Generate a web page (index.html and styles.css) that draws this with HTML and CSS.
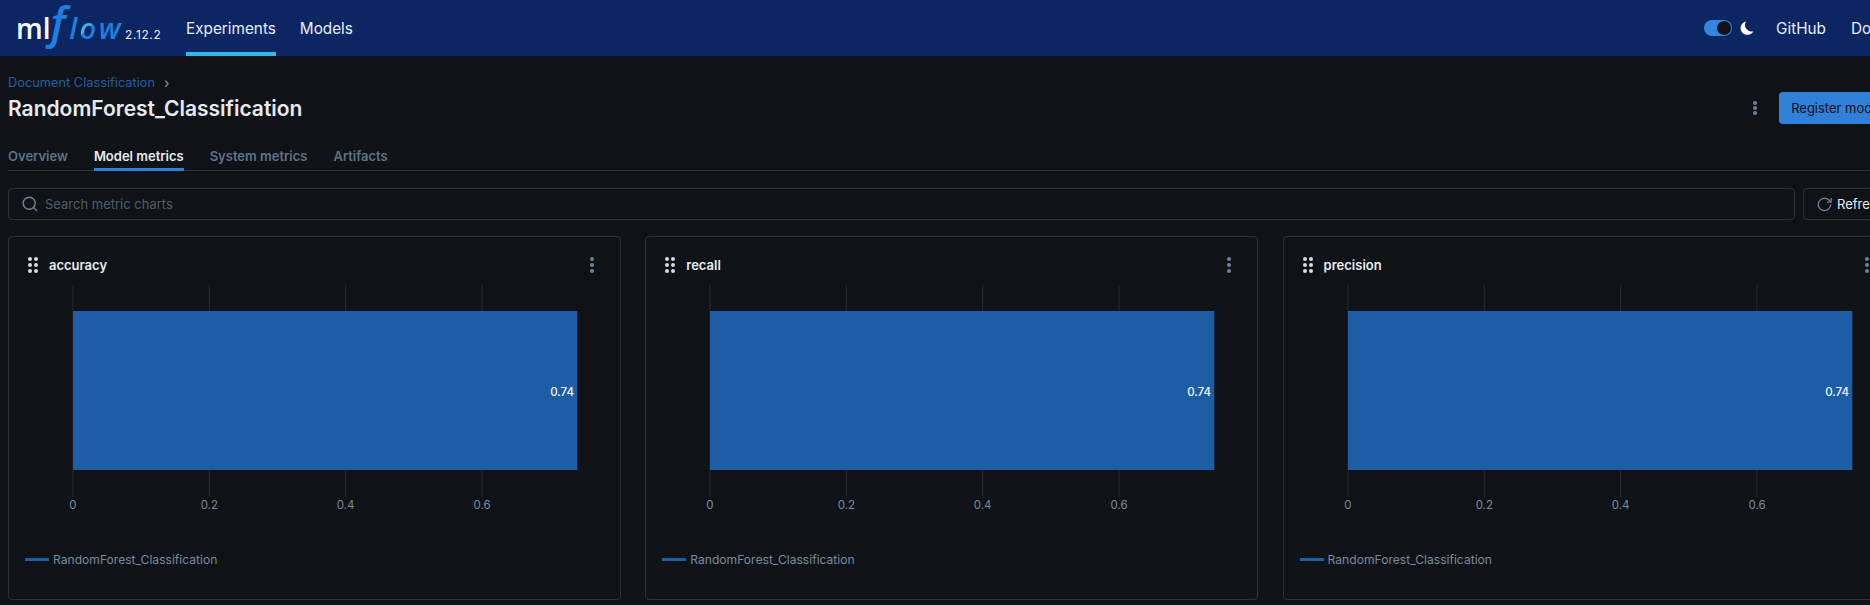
FILE: index.html
```html
<!DOCTYPE html>
<html lang="en">
<head>
    <meta charset="UTF-8">
    <title>RandomForest_Classification - MLflow</title>
    <link rel="stylesheet" href="styles.css">
</head>
<body>
    <header class="topbar">
        <div class="logo">
            <span class="logo-ml">ml</span><span class="logo-flow"><span class="logo-f">f</span>l<span class="logo-o">o</span>w</span>
        </div>
        <span class="version">2.12.2</span>
        <nav class="mainnav">
            <a class="active">Experiments</a>
            <a>Models</a>
        </nav>
        <div class="topright">
            <span class="toggle"><span class="knob"></span></span>
            <svg class="moon" width="14" height="14" viewBox="0 0 14 14"><path d="M6 .4A6.8 6.8 0 1 0 13.4 10.2 6.6 6.6 0 0 1 6 .4Z" fill="#fff"/></svg>
            <a class="link-github">GitHub</a>
            <a class="link-docs">Docs</a>
        </div>
    </header>

    <main class="page">
        <div class="breadcrumb"><a>Document Classification</a><span class="sep">›</span></div>
        <div class="titlerow">
            <h1>RandomForest_Classification</h1>
            <div class="actions">
                <span class="kebab big"><i></i><i></i><i></i></span>
                <button class="primary">Register model</button>
            </div>
        </div>

        <div class="tabs">
            <a>Overview</a>
            <a class="active">Model metrics</a>
            <a>System metrics</a>
            <a>Artifacts</a>
        </div>

        <div class="toolbar">
            <div class="search">
                <svg width="16" height="16" viewBox="0 0 16 16" fill="none" stroke="#6f8195" stroke-width="1.4"><circle cx="7.2" cy="7.2" r="6"/><path d="M11.6 11.6 15 15"/></svg>
                <span>Search metric charts</span>
            </div>
            <button class="refresh">
                <svg width="15" height="15" viewBox="0 0 16 16" fill="none" stroke="#6f8195" stroke-width="1.4"><path d="M14.6 8A6.6 6.6 0 1 1 12.4 3L14.6 5"/><path d="M15 1v4.4h-4.4"/></svg>
                Refresh
            </button>
        </div>

        <div class="cards">
            <section class="card">
                <div class="card-head">
                    <span class="grip"><i></i><i></i><i></i><i></i><i></i><i></i></span>
                    <span class="card-title">accuracy</span>
                    <span class="kebab"><i></i><i></i><i></i></span>
                </div>
                <svg class="chart" width="612" height="232" viewBox="0 0 612 232">
                    <g class="grid"><path d="M64 0V212M200.3 0V212M336.6 0V212M473 0V212"/></g>
                    <rect class="bar" x="64" y="26" width="504.3" height="159"/>
                    <text class="value" x="565" y="111" text-anchor="end">0.74</text>
                    <g class="ticks" text-anchor="middle">
                        <text x="64" y="224">0</text>
                        <text x="200.3" y="224">0.2</text>
                        <text x="336.6" y="224">0.4</text>
                        <text x="473" y="224">0.6</text>
                    </g>
                </svg>
                <div class="legend"><span class="swatch"></span>RandomForest_Classification</div>
            </section>
            <section class="card">
                <div class="card-head">
                    <span class="grip"><i></i><i></i><i></i><i></i><i></i><i></i></span>
                    <span class="card-title">recall</span>
                    <span class="kebab"><i></i><i></i><i></i></span>
                </div>
                <svg class="chart" width="612" height="232" viewBox="0 0 612 232">
                    <g class="grid"><path d="M64 0V212M200.3 0V212M336.6 0V212M473 0V212"/></g>
                    <rect class="bar" x="64" y="26" width="504.3" height="159"/>
                    <text class="value" x="565" y="111" text-anchor="end">0.74</text>
                    <g class="ticks" text-anchor="middle">
                        <text x="64" y="224">0</text>
                        <text x="200.3" y="224">0.2</text>
                        <text x="336.6" y="224">0.4</text>
                        <text x="473" y="224">0.6</text>
                    </g>
                </svg>
                <div class="legend"><span class="swatch"></span>RandomForest_Classification</div>
            </section>
            <section class="card">
                <div class="card-head">
                    <span class="grip"><i></i><i></i><i></i><i></i><i></i><i></i></span>
                    <span class="card-title">precision</span>
                    <span class="kebab"><i></i><i></i><i></i></span>
                </div>
                <svg class="chart" width="612" height="232" viewBox="0 0 612 232">
                    <g class="grid"><path d="M64 0V212M200.3 0V212M336.6 0V212M473 0V212"/></g>
                    <rect class="bar" x="64" y="26" width="504.3" height="159"/>
                    <text class="value" x="565" y="111" text-anchor="end">0.74</text>
                    <g class="ticks" text-anchor="middle">
                        <text x="64" y="224">0</text>
                        <text x="200.3" y="224">0.2</text>
                        <text x="336.6" y="224">0.4</text>
                        <text x="473" y="224">0.6</text>
                    </g>
                </svg>
                <div class="legend"><span class="swatch"></span>RandomForest_Classification</div>
            </section>
        </div>
    </main>
</body>
</html>
```

FILE: styles.css
```css
html, body {
    margin: 0;
    height: 605px;
    overflow: hidden;
    background-color: #0f1317;
}
body {
    width: 1904px;
    font-family: Inter, "Liberation Sans", sans-serif;
    font-size: 13px;
    color: #e6ebf0;
}
button {
    font-family: inherit;
    font-size: 13px;
}

/* top bar */
.topbar {
    height: 56px;
    background-color: #0b2663;
    display: flex;
    align-items: center;
    padding-left: 16px;
    color: #e8eef7;
}
.logo {
    display: flex;
    align-items: baseline;
    width: 109px;
    height: 56px;
    line-height: 50px;
}
.logo-ml {
    font-family: "Open Sans", sans-serif;
    font-size: 28px;
    font-weight: 600;
    color: #fff;
}
.logo-flow {
    font-family: "Open Sans", sans-serif;
    font-size: 29px;
    font-style: italic;
    font-weight: 600;
    letter-spacing: 2.5px;
    color: #1f7fdc;
}
.logo-f {
    font-size: 44px;
    line-height: 1;
    margin-right: 1px;
    font-weight: 600;
}
.logo-o {
    background: linear-gradient(135deg, #35b9e6 50%, #1f7fdc 50%);
    -webkit-background-clip: text;
    background-clip: text;
    color: transparent;
}
.version {
    font-size: 12px;
    letter-spacing: 0.6px;
    margin-top: 12px;
    width: 61px;
}
.mainnav {
    display: flex;
    gap: 24px;
    height: 56px;
}
.mainnav a {
    font-size: 15.3px;
    line-height: 57px;
    box-sizing: border-box;
}
.mainnav a.active {
    border-bottom: 4px solid #33b8e8;
}
.topright {
    margin-left: auto;
    display: flex;
    align-items: center;
    font-size: 15.3px;
    padding-right: 16px;
}
.toggle {
    width: 28px;
    height: 16px;
    background-color: #3584dd;
    border-radius: 8px;
    display: flex;
    align-items: center;
    justify-content: flex-end;
    padding-right: 1px;
    box-sizing: border-box;
}
.knob {
    width: 14px;
    height: 14px;
    border-radius: 50%;
    background-color: #0f1317;
}
.moon {
    margin-left: 8px;
}
.link-github {
    margin-left: 22px;
}
.link-docs {
    margin-left: 25px;
}

/* page */
.page {
    padding: 0 8px;
}
.breadcrumb {
    display: flex;
    align-items: center;
    gap: 9px;
    padding-top: 17px;
    height: 19px;
    line-height: 18px;
    font-size: 12.8px;
    color: #1f5fa6;
}
.breadcrumb .sep {
    color: #8a99a8;
    font-size: 14px;
}
.titlerow {
    display: flex;
    align-items: center;
    justify-content: space-between;
    height: 32px;
}
h1 {
    margin: 0;
    font-size: 21px;
    line-height: 33px;
    font-weight: 600;
    color: #e6ebf0;
}
.actions {
    display: flex;
    align-items: center;
    gap: 22px;
}
.primary {
    background-color: #2f80d9;
    color: #0f1317;
    border: none;
    border-radius: 4px;
    height: 32px;
    padding: 0 13px 0 12px;
}
.kebab {
    display: flex;
    flex-direction: column;
    gap: 2px;
}
.kebab i {
    width: 4px;
    height: 4px;
    border-radius: 50%;
    background-color: #6f8195;
}
.kebab.big {
    gap: 1px;
}

.tabs {
    display: flex;
    gap: 26px;
    margin-top: 18px;
    height: 29px;
    box-sizing: border-box;
    border-bottom: 1px solid #2a333d;
    font-weight: 600;
    color: #5f7186;
}
.tabs a {
    height: 29px;
    box-sizing: border-box;
    line-height: 28px;
}
.tabs a.active {
    color: #e6ebf0;
    border-bottom: 3px solid #2f80d9;
}

.toolbar {
    display: flex;
    gap: 8px;
    margin-top: 17px;
    height: 32px;
}
.search {
    width: 1787px;
    box-sizing: border-box;
    border: 1px solid #2a333d;
    border-radius: 4px;
    display: flex;
    align-items: center;
    gap: 7px;
    padding-left: 13px;
    color: #4f5c68;
}
.refresh {
    flex: 1;
    background: none;
    border: 1px solid #2a333d;
    border-radius: 4px;
    color: #e6ebf0;
    display: flex;
    align-items: center;
    gap: 5px;
    padding-left: 13px;
}

/* chart cards */
.cards {
    display: grid;
    grid-template-columns: repeat(3, 613px);
    gap: 24.3px;
    margin-top: 16px;
}
.card {
    height: 364px;
    box-sizing: border-box;
    border: 1px solid #2a333d;
    border-radius: 4px;
}
.card-head {
    display: flex;
    align-items: center;
    height: 48px;
    box-sizing: border-box;
    padding: 8px 21px 0 19px;
}
.grip {
    display: grid;
    grid-template-columns: 4px 4px;
    gap: 2px;
    column-gap: 2px;
    margin-right: 11px;
}
.grip i {
    width: 4px;
    height: 4px;
    border-radius: 50%;
    background-color: #d5dbe2;
}
.card-title {
    font-weight: 600;
    color: #e6ebf0;
}
.card-head .kebab {
    margin-left: auto;
    margin-right: 5px;
}
.chart {
    display: block;
}
.grid path {
    stroke: #262a30;
    stroke-width: 1;
    fill: none;
}
.bar {
    fill: #1d5da3;
}
.value {
    fill: #f2f5f8;
    font-size: 11.5px;
    font-weight: 500;
}
.ticks text {
    fill: #7a8a9c;
    font-size: 11.5px;
}
.legend {
    display: flex;
    align-items: center;
    gap: 4px;
    margin-top: 35px;
    padding-left: 16px;
    font-size: 12.1px;
    color: #7a8a9c;
}
.swatch {
    width: 24px;
    height: 3px;
    background-color: #1d5da3;
}
```
